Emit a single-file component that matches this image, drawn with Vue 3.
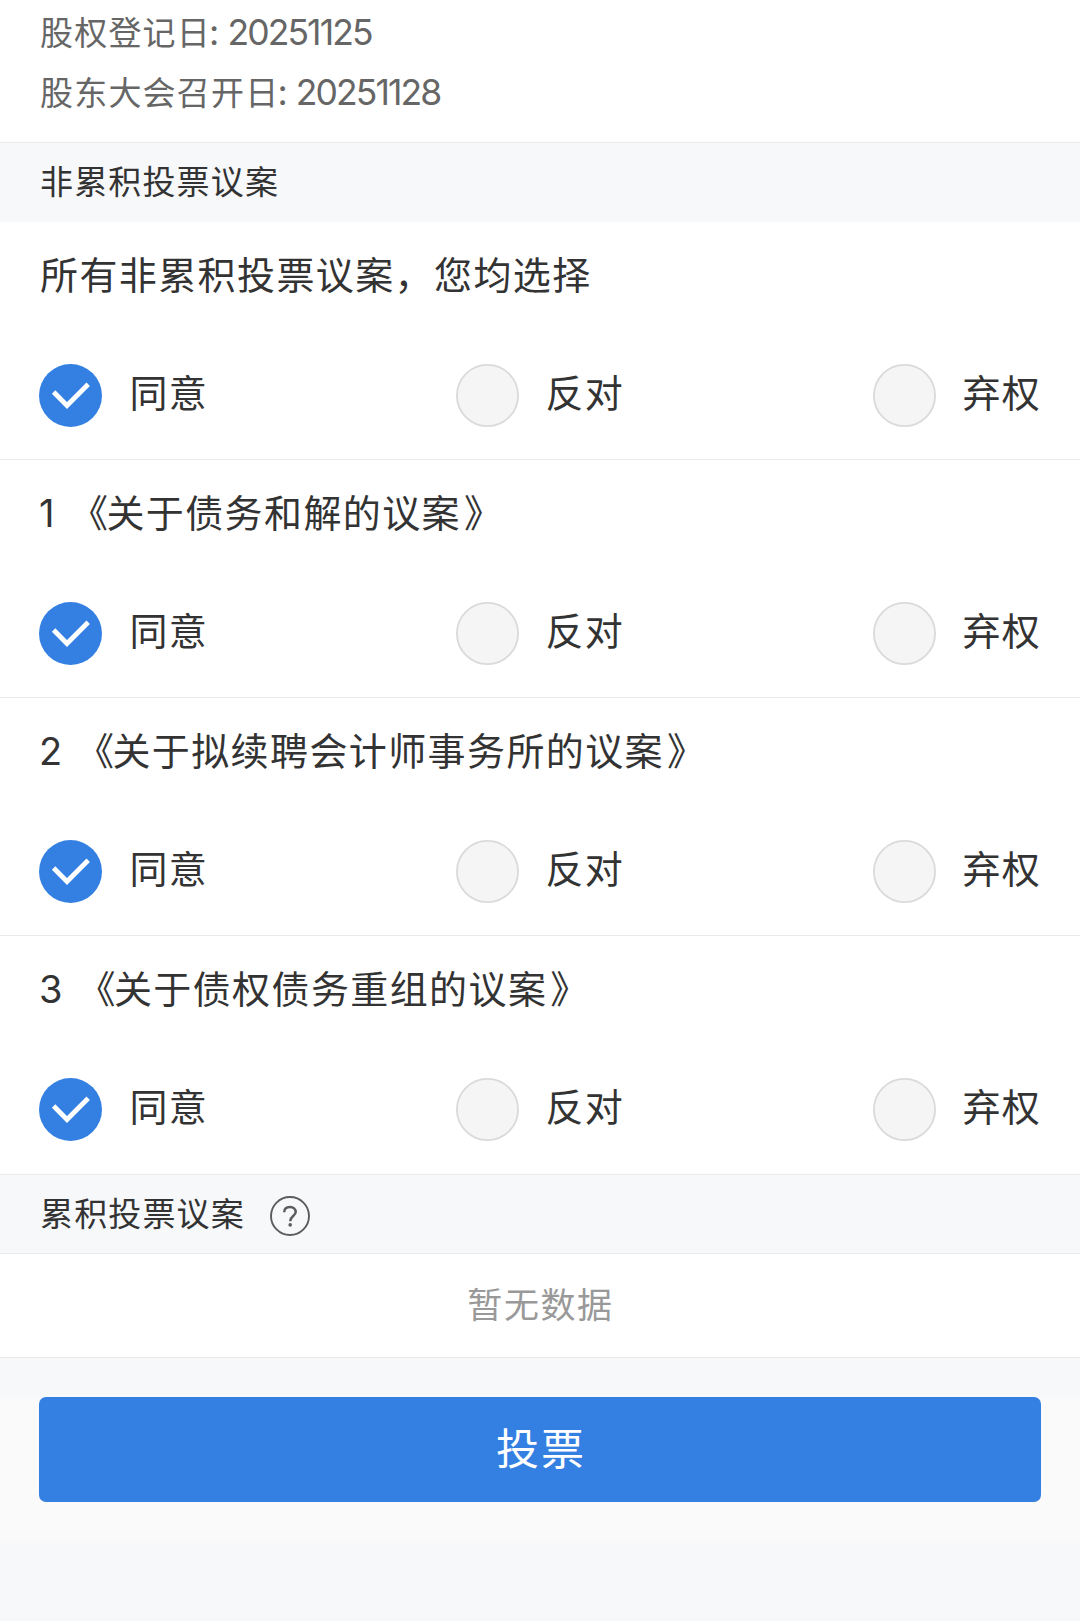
<script setup>
import { reactive } from 'vue'

const dates = [
  { label: '股权登记日', value: '20251125' },
  { label: '股东大会召开日', value: '20251128' },
]
const choices = ['同意', '反对', '弃权']
const proposals = reactive([
  { no: '', title: '所有非累积投票议案，您均选择', picked: 0 },
  { no: '1', title: '关于债务和解的议案', picked: 0 },
  { no: '2', title: '关于拟续聘会计师事务所的议案', picked: 0 },
  { no: '3', title: '关于债权债务重组的议案', picked: 0 },
])
</script>

<template>
  <main class="page">
    <header class="dates">
      <div v-for="d in dates" :key="d.label" class="date">{{ d.label }}<span class="num">: {{ d.value }}</span></div>
    </header>
    <h2 class="band">非累积投票议案</h2>
    <section v-for="(p, pi) in proposals" :key="pi" class="proposal">
      <h3 v-if="p.no" class="title"><span class="no" :class="'no-' + p.no">{{ p.no }}</span><span class="open">《</span>{{ p.title }}<span class="close">》</span></h3>
      <h3 v-else class="title">{{ p.title }}</h3>
      <div class="options">
        <div v-for="(c, i) in choices" :key="c" class="option" @click="p.picked = i">
          <svg v-if="p.picked === i" class="radio" viewBox="0 0 63 63">
            <circle cx="31.5" cy="31.5" r="31.5" fill="#3480e2" />
            <path d="M14.6 28 28 41.5 49.2 20.2" fill="none" stroke="#fff" stroke-width="4.8" />
          </svg>
          <svg v-else class="radio" viewBox="0 0 63 63">
            <circle cx="31.5" cy="31.5" r="30.6" fill="#f5f5f5" stroke="#dadada" stroke-width="1.8" />
          </svg>
          <span class="choice">{{ c }}</span>
        </div>
      </div>
    </section>
    <h2 class="band band-help">
      累积投票议案
      <svg class="help" viewBox="0 0 40 40" fill="none" stroke="#5c5c5c">
        <circle cx="20" cy="20" r="19" stroke-width="1.9" />
        <path d="M14.2 16.2C14.2 12.7 16.7 10.9 20 10.9S25.7 13 25.7 16C25.7 20 20.2 20.2 20.2 25.2" stroke-width="2.5" />
        <circle cx="20.2" cy="28.9" r="1.8" fill="#5c5c5c" stroke="none" />
      </svg>
    </h2>
    <div class="empty">暂无数据</div>
    <footer class="footer">
      <button class="submit">投票</button>
    </footer>
  </main>
</template>

<style>
body {
  margin: 0;
  background: #f7f8fa;
}
</style>

<style scoped>
.page {
  display: flex;
  flex-direction: column;
  height: 1621px;
  overflow: hidden;
  background: #f7f8fa;
  color: #333;
  font-family: "Noto Sans CJK SC", sans-serif;
}
.dates {
  box-sizing: border-box;
  height: 142px;
  padding: 1px 40px 0;
  background: #fff;
  color: #666;
}
.date {
  height: 60px;
  line-height: 60px;
  font-size: 33px;
  letter-spacing: 1.2px;
  white-space: nowrap;
}
.num {
  margin-left: -2px;
  font-family: Inter, sans-serif;
  font-size: 35.5px;
  font-weight: 400;
  letter-spacing: -1.9px;
  word-spacing: 2px;
}
.band {
  box-sizing: border-box;
  display: flex;
  align-items: center;
  height: 80px;
  margin: 0;
  padding: 0 40px 5px;
  border-top: 1px solid #ebebeb;
  font-size: 33px;
  font-weight: 400;
  line-height: 48px;
  letter-spacing: 1.15px;
}
.proposal {
  box-sizing: border-box;
  flex: none;
  height: 237px;
  background: #fff;
}
.proposal + .proposal {
  height: 238px;
  border-top: 1px solid #ebebeb;
}
.proposal:nth-last-of-type(1) {
  height: 239px;
}
.title {
  height: 106px;
  margin: 0;
  padding-left: 40px;
  line-height: 102px;
  font-size: 38px;
  font-weight: 400;
  letter-spacing: 1.4px;
  white-space: nowrap;
}
.no {
  display: inline-block;
  width: 34px;
  margin-left: -1px;
  font-family: Inter, sans-serif;
  font-size: 38px;
  line-height: 1;
  letter-spacing: 0;
}
.no-1 {
  width: 28px;
}
.no-3 {
  width: 35.5px;
}
.open {
  margin: 0 -3px 0 3px;
}
.close {
  margin-left: 3px;
}
.options {
  display: flex;
  justify-content: space-between;
  padding: 36px 39px 0;
}
.option {
  display: flex;
  align-items: center;
  justify-content: space-between;
  width: 168px;
  height: 63px;
}
.option:first-child {
  width: 169px;
  margin-right: -1px;
}
.radio {
  width: 63px;
  height: 63px;
}
.choice {
  height: 63px;
  font-size: 38px;
  line-height: 54px;
  letter-spacing: 1.2px;
}
.band-help {
  height: 79px;
  padding-bottom: 4px;
}
.help {
  width: 40px;
  height: 40px;
  margin: 7px 0 0 25px;
}
.empty {
  box-sizing: border-box;
  height: 105px;
  border: solid #ebebeb;
  border-width: 1px 0;
  background: #fff;
  color: #999;
  font-size: 35px;
  letter-spacing: 1.6px;
  line-height: 98px;
  text-indent: 1px;
  text-align: center;
}
.footer {
  margin-top: 39px;
  padding: 0 39px 41px;
  background: #fafafa;
}
.submit {
  display: block;
  width: 100%;
  height: 105px;
  padding: 0 0 6px 2px;
  border: 0;
  border-radius: 7px;
  background: #3480e2;
  color: #fff;
  font: 400 43px/99px "Noto Sans CJK SC", sans-serif;
  letter-spacing: 2px;
}
</style>
